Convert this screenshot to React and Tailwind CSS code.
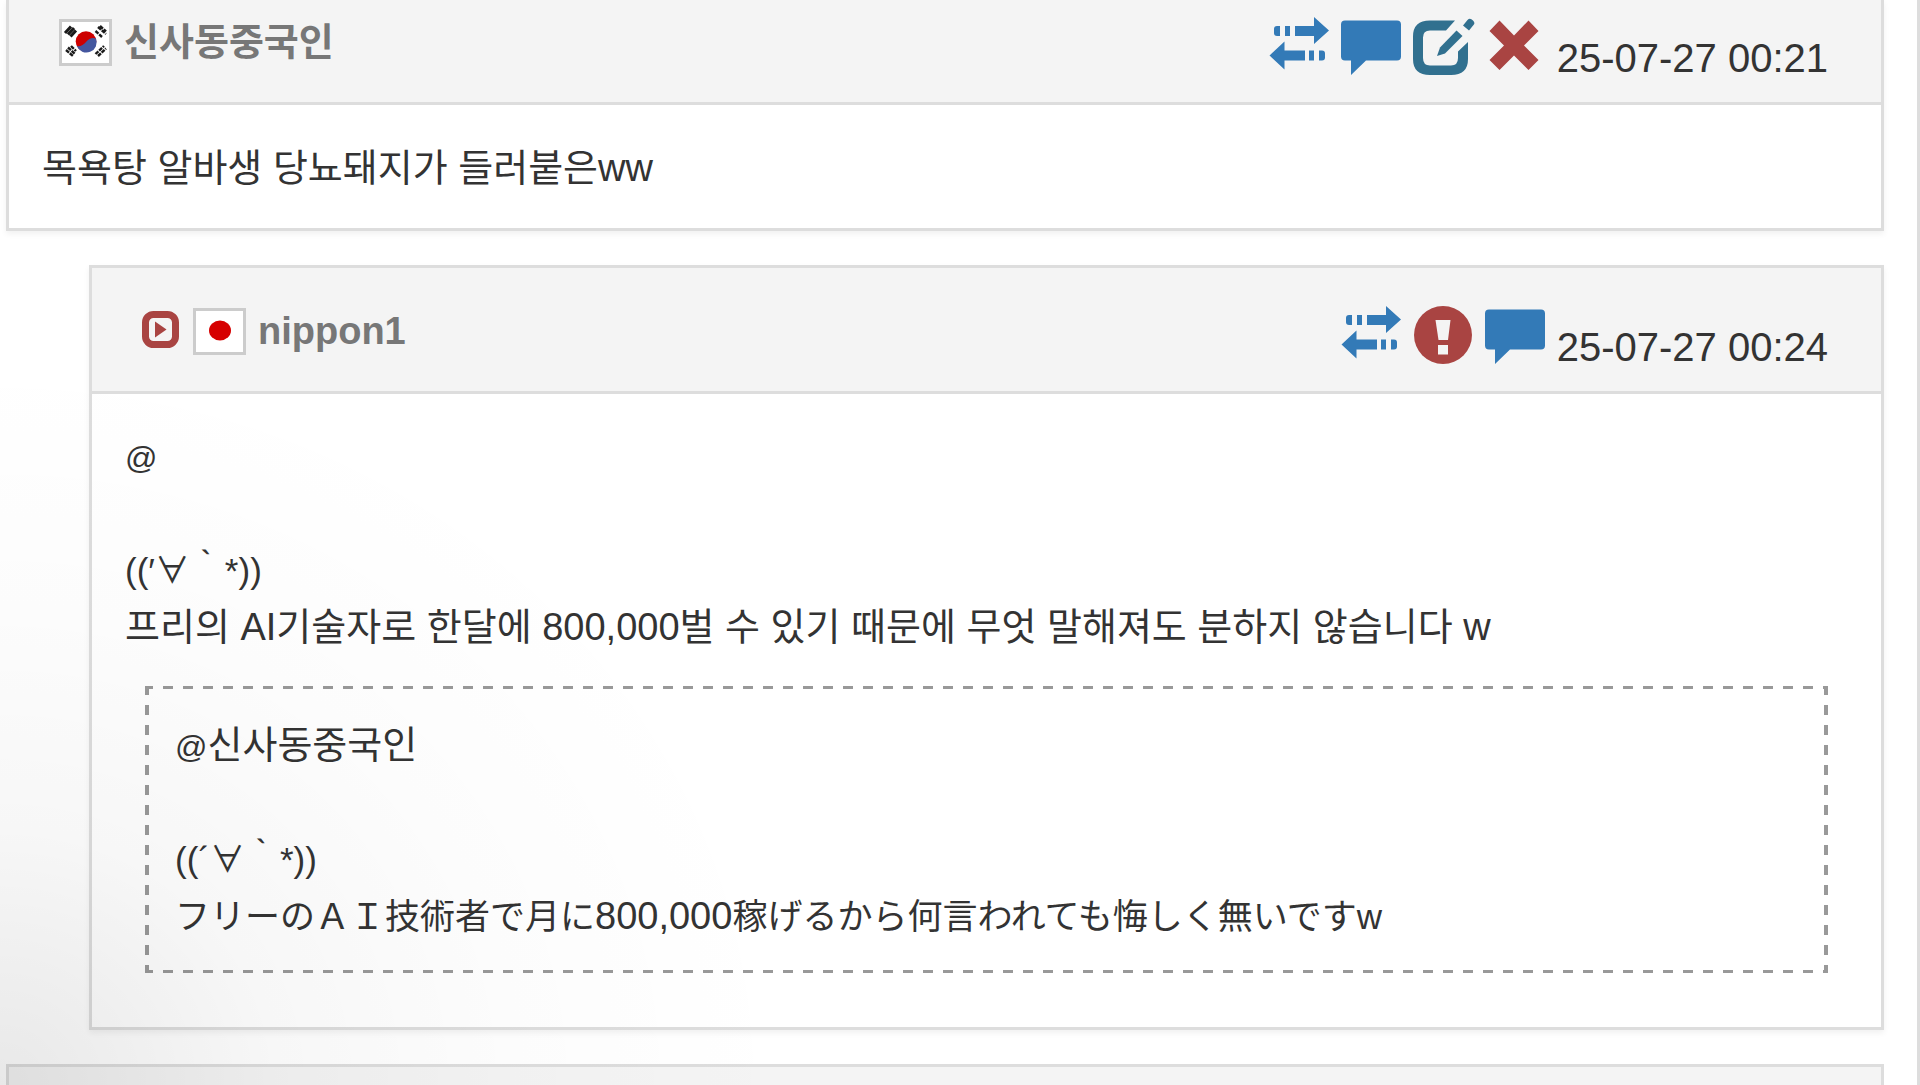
import React from "react";

function SwapIcon() {
  return (
    <svg viewBox="0 0 60 62" className="w-[60px] h-[62px]" fill="currentColor">
      <path d="M26 10H45V1L60 14.5L45 28V20H26Z" />
      <path d="M16 10H21V20H16Z" />
      <path d="M8 10H11V20H8Q5 20 5 17V13Q5 10 8 10Z" />
      <path d="M36 34.5H15.5V25.5L0.5 39.5L15.5 53.5V44.5H36Z" />
      <path d="M40 34.5H45V44.5H40Z" />
      <path d="M50 34.5H53Q56 34.5 56 37.5V41.5Q56 44.5 53 44.5H50Z" />
    </svg>
  );
}

function CommentIcon() {
  return (
    <svg viewBox="0 0 60 62" className="w-[60px] h-[62px]" fill="currentColor">
      <path d="M4 4.5H56Q60 4.5 60 8.5V40.5Q60 44.5 56 44.5H25L10 59V44.5H4Q0 44.5 0 40.5V8.5Q0 4.5 4 4.5Z" />
    </svg>
  );
}

function EditIcon() {
  return (
    <svg viewBox="0 0 60 62" className="w-[60px] h-[62px] overflow-visible" fill="currentColor">
      <path d="M42 4.5H17Q0 4.5 0 20.5V43Q0 59 17 59H38Q55 59 55 43V26L45 35.5V42Q45 49.5 38 49.5H17Q10 49.5 10 42V21.5Q10 14.5 17 14.5H33Z" />
      <path d="M43.5 14.5L49.5 20L32 37.5L24 40L27 31.5Z" />
      <path d="M50 9.5L54.5 4Q57 1.5 60 4.5Q62.5 7 60.5 9L56 14.5Z" />
    </svg>
  );
}

function RemoveIcon() {
  return (
    <svg viewBox="0 0 60 62" className="w-[60px] h-[62px]" fill="currentColor">
      <path d="M14.5 4.5L29 19.5L43.5 4.5L53.5 15L39 29.5L53.5 44L43.5 54L29 39.5L14.5 54L4.5 44L19 29.5L4.5 15Z" />
    </svg>
  );
}

function ReportIcon() {
  return (
    <svg viewBox="0 0 60 62" className="w-[60px] h-[62px]">
      <circle cx="30" cy="30" r="29" fill="currentColor" />
      <path d="M22.5 15H37.5L35 35H25.5Z" fill="#f4f4f4" />
      <path d="M25 40H35V49.5H25Z" fill="#f4f4f4" />
    </svg>
  );
}

function ReplyMark() {
  return (
    <svg viewBox="0 0 37 37" className="size-[37px] mr-0.5 mb-1 text-[#a94442]">
      <rect x="3.5" y="3.5" width="30" height="30" rx="8" fill="none" stroke="currentColor" strokeWidth="7" />
      <path d="M13 10.5L24.5 18.5L13 26.5Z" fill="currentColor" />
    </svg>
  );
}

function Flag({ country }) {
  return (
    <svg
      viewBox="0 0 47 41"
      role="img"
      aria-label={country}
      className="box-content w-[47px] h-[41px] border-3 border-[#ccc] bg-white"
    >
      {country === "jp" ? (
        <ellipse cx="24" cy="19.5" rx="11" ry="10" fill="#d60000" />
      ) : (
        <g>
          <circle cx="24" cy="19.5" r="10.3" fill="#cd0000" />
          <path
            d="M34 16.5A10.3 10.3 0 0 1 14.8 24Q20 25 24 20Q28.5 14.5 34 16.5Z"
            fill="#44579f"
          />
          <g stroke="#1a1a1a" strokeWidth="2.4" fill="none">
            <path d="M3 11L9 4.5M6 12.5L12 6M8.5 14.5L14 8.5" strokeWidth="3" />
            <path d="M36 5L44 12M38 4L44 9.5M33.5 9L40 15" strokeDasharray="4 1" />
            <path d="M4 28L11 34M6 25.5L13 32M9 24L14 29" strokeDasharray="4 1" />
            <path d="M33.5 32L42 24M36 34L44 26.5" strokeDasharray="4 1" />
          </g>
        </g>
      )}
    </svg>
  );
}

const actionIcons = {
  swap: { label: "Translate", icon: SwapIcon, color: "text-[#337ab7]" },
  comment: { label: "Reply", icon: CommentIcon, color: "text-[#337ab7]" },
  edit: { label: "Edit", icon: EditIcon, color: "text-[#31708f]" },
  remove: { label: "Delete", icon: RemoveIcon, color: "text-[#a94442]" },
  report: { label: "Report", icon: ReportIcon, color: "text-[#a94442]" },
};

function CommentHeader({ name, country, date, actions, reply }) {
  return (
    <header className="flex items-end justify-between pl-[50px] pr-[53px] pb-6 bg-[#f4f4f4] border-b-3 border-[#ddd]">
      <div className="flex items-center gap-3 mb-3">
        {reply && <ReplyMark />}
        <Flag country={country} />
        <a href="#" className="text-[38px] leading-[48px] font-bold text-[#777]">
          {name}
        </a>
      </div>
      <div className="flex items-end gap-3">
        {actions.map((key) => {
          const { label, icon: Icon, color } = actionIcons[key];
          return (
            <button key={key} type="button" aria-label={label} className={color}>
              <Icon />
            </button>
          );
        })}
        <time className="text-[40px] leading-10">{date}</time>
      </div>
    </header>
  );
}

function Japanese({ children }) {
  return (
    <span
      lang="ja"
      className="text-[35px] leading-none font-['Liberation_Sans','Noto_Sans_CJK_JP',sans-serif]"
    >
      {children}
    </span>
  );
}

function App() {
  return (
    <div
      lang="ko"
      className="relative h-screen overflow-hidden bg-white border-r-3 border-[#ddd] pl-1.5 pr-[33px] text-[38px] leading-[57px] text-[#333] font-['Liberation_Sans','Noto_Sans_CJK_KR',sans-serif]"
    >
      {/* Parent comment */}
      <article className="border-3 border-t-0 border-[#ddd] shadow-[0_3px_6px_rgba(0,0,0,0.06)]">
        <div className="pt-4 bg-[#f4f4f4]">
          <CommentHeader
            name="신사동중국인"
            country="kr"
            date="25-07-27 00:21"
            actions={["swap", "comment", "edit", "remove"]}
          />
        </div>
        <p className="px-[33px] pt-[35px] pb-[31px]">목욕탕 알바생 당뇨돼지가 들러붙은ww</p>
      </article>

      {/* Reply */}
      <article className="mt-[34px] ml-[83px] border-3 border-[#ddd] shadow-[0_3px_6px_rgba(0,0,0,0.06)]">
        <div className="pt-[37px] bg-[#f4f4f4]">
          <CommentHeader
            reply
            name="nippon1"
            country="jp"
            date="25-07-27 00:24"
            actions={["swap", "report", "comment"]}
          />
        </div>
        <div className="px-[33px] py-[34px]">
          <p>
            <span className="text-[32px] leading-none">@</span>
            <br />
            <br />
            <Japanese>((′∀｀*))</Japanese>
            <br />
            프리의 AI기술자로 한달에 800,000벌 수 있기 때문에 무엇 말해져도 분하지 않습니다 w
          </p>
          <blockquote className="mt-[30px] mx-5 mb-5 px-[30px] pt-[31px] pb-[28px] [background:linear-gradient(90deg,#999_50%,transparent_0)_-2px_0/20px_3px_repeat-x,linear-gradient(90deg,#999_50%,transparent_0)_-2px_100%/20px_3px_repeat-x,linear-gradient(#999_50%,transparent_0)_0_-1px/4px_20px_repeat-y,linear-gradient(#999_50%,transparent_0)_100%_-1px/4px_20px_repeat-y]">
            <span className="text-[32px] leading-none">@</span>신사동중국인
            <br />
            <br />
            <Japanese>((´∀｀*))</Japanese>
            <br />
            <Japanese>
              フリーのＡＩ技術者で月に<span className="text-[38px]">800,000</span>稼げるから何言われても悔しく無いですw
            </Japanese>
          </blockquote>
        </div>
      </article>

      {/* Next comment, cut off by the window */}
      <article className="mt-[34px] h-32 border-3 border-[#ddd] bg-[#f4f4f4]" />

      {/* Corner shade */}
      <div className="absolute inset-0 pointer-events-none bg-[radial-gradient(ellipse_800px_740px_at_0%_100%,rgba(0,0,0,0.09),rgba(0,0,0,0.03)_35%,rgba(0,0,0,0.01)_65%,transparent)]" />
    </div>
  );
}

export default App;
